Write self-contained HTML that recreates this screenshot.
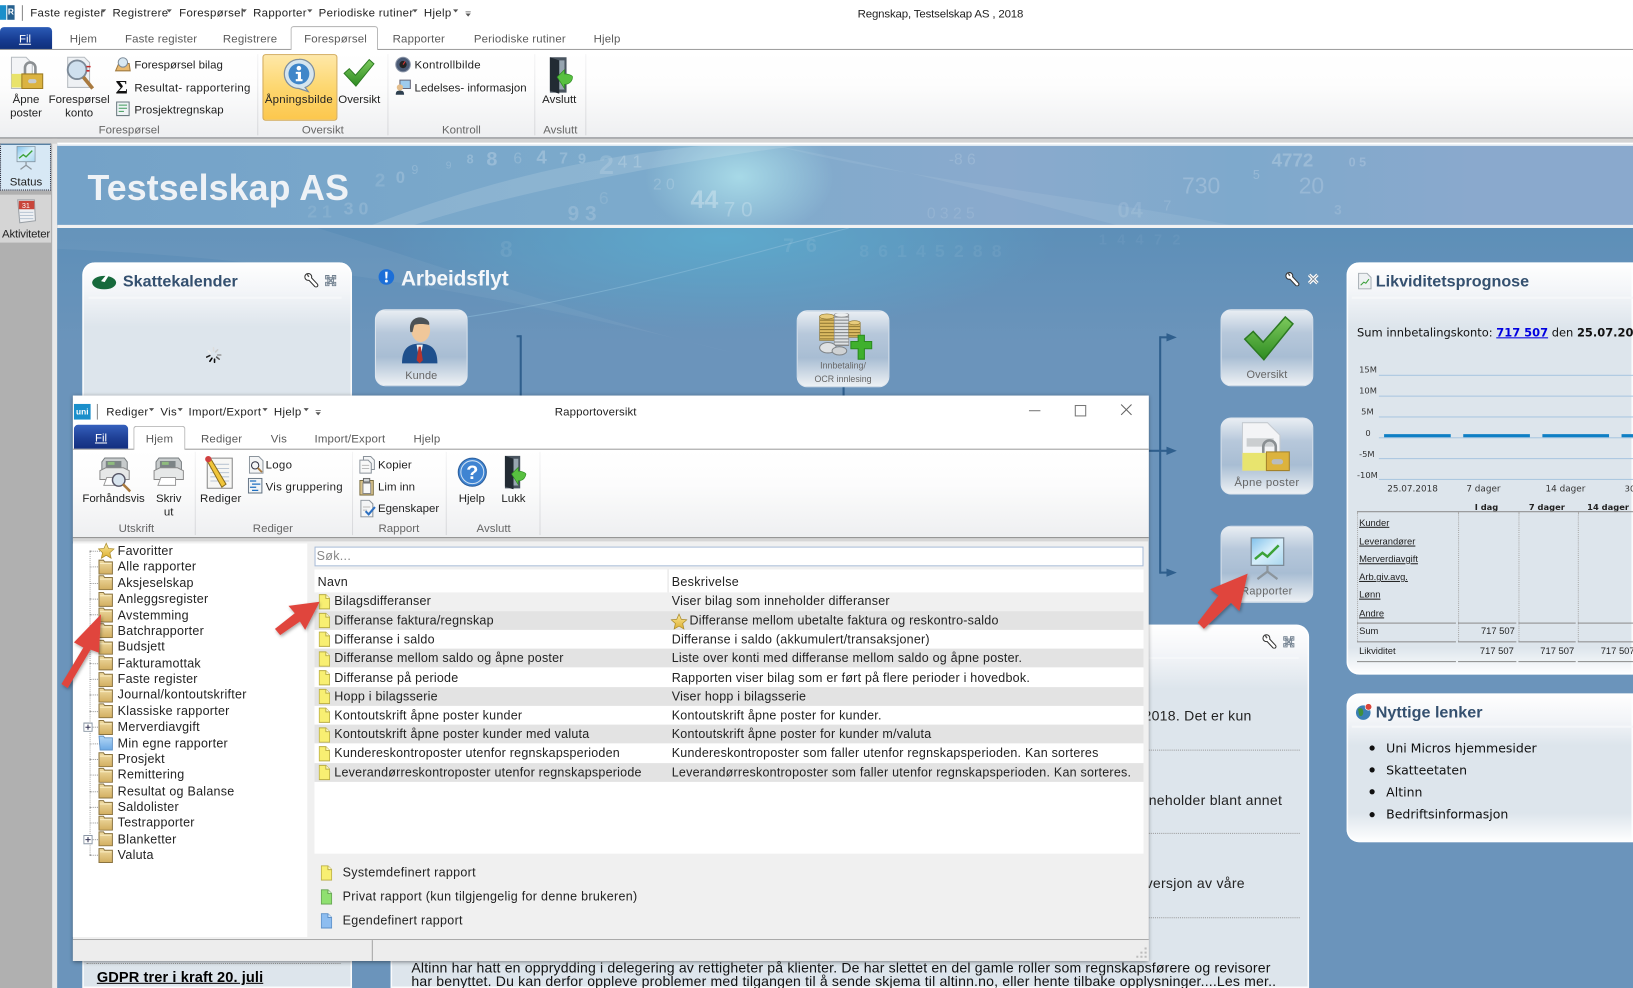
<!DOCTYPE html>
<html lang="no"><head><meta charset="utf-8"><title>Regnskap, Testselskap AS</title>
<style>
html,body{margin:0;padding:0;width:1633px;height:988px;overflow:hidden;background:#6b94bb}
#r{position:absolute;left:0;top:0;width:1568px;height:949px;transform-origin:0 0;transform:scale(1.04145,1.0411);overflow:hidden;font-family:"Liberation Sans",sans-serif;font-size:11px;color:#222;background:#6b94bb}
.a,.t,svg.i{position:absolute}
.t{white-space:nowrap;line-height:14px;letter-spacing:0;font-style:normal;font-size:11px;margin-top:1px}
.c{transform:translateX(-50%)}
.g{color:#666}.tb{color:#5a5a5a;letter-spacing:.15px;margin-top:0}
.m{letter-spacing:.3px}
.l{font-size:12px;letter-spacing:.22px;margin-top:0}
.tr{font-size:12px;letter-spacing:.25px;margin-top:0}
.lg{font-size:12px;letter-spacing:.3px;margin-top:0}
.dg{position:absolute;color:#fff;white-space:nowrap;line-height:1;font-weight:bold}
.sep{position:absolute;width:1px;background:linear-gradient(#f4f4f5,#d6d7da)}
.card{position:absolute;border-radius:12px;box-shadow:inset 0 0 0 1.5px rgba(255,255,255,.85);background:linear-gradient(#fff 0,#f3f5f8 28px,#dde5ec 62px,#dde5ec 100%)}
.hd{position:absolute;font-weight:bold;font-size:15.5px;line-height:18px;color:#34506f;white-space:nowrap}
.wl{position:absolute;height:2px;background:#f5f7f9}
.btn{position:absolute;width:87px;height:72px;border:1px solid #dfe6ee;border-radius:10px;background:linear-gradient(#e9eef3,#b7c8db 30%,#a8bdd3 62%,#dfe6ed 92%,#edf1f5)}
.bl{position:absolute;left:0;right:0;text-align:center;font-size:10.5px;color:#666;letter-spacing:.3px;line-height:12px;white-space:nowrap}
.d{position:absolute;border-left:1px dotted #aaa}
.h{position:absolute;border-top:1px dotted #999}
.vf{font-family:"DejaVu Sans",sans-serif;letter-spacing:0}
.tl{color:#222;font-size:9px;text-decoration:underline;letter-spacing:0}
.line{position:absolute;background:#2f5f8d}
.ln{position:absolute;background:#8d8d8d;height:1px}
.sm{font-size:9px}
.mt{font-size:13.5px;letter-spacing:.25px;color:#222}
</style></head><body><div id="r">
<svg width="0" height="0" style="position:absolute"><defs>
<linearGradient id="fo" x1="0" y1="0" x2="0" y2="1"><stop offset="0" stop-color="#f0dca4"/><stop offset="1" stop-color="#d2ae60"/></linearGradient>
<linearGradient id="fb" x1="0" y1="0" x2="0" y2="1"><stop offset="0" stop-color="#b6d8f6"/><stop offset="1" stop-color="#6ba8e4"/></linearGradient>
<linearGradient id="st" x1="0" y1="0" x2="0" y2="1"><stop offset="0" stop-color="#fbe99a"/><stop offset="1" stop-color="#dcae2e"/></linearGradient>
<linearGradient id="ck" x1="0" y1="0" x2="0" y2="1"><stop offset="0" stop-color="#7cc95c"/><stop offset="1" stop-color="#2e8c22"/></linearGradient>
<linearGradient id="sky" x1="0" y1="0" x2="1" y2="1"><stop offset="0" stop-color="#7fc0ea"/><stop offset=".5" stop-color="#d6eefa"/><stop offset="1" stop-color="#a9d6ee"/></linearGradient>
<pattern id="cg" width="4" height="3" patternUnits="userSpaceOnUse"><rect width="4" height="3" fill="#dcbb62"/><rect width="4" height="1" fill="#8c7430"/></pattern>
<pattern id="cs" width="4" height="3" patternUnits="userSpaceOnUse"><rect width="4" height="3" fill="#dfe2e4"/><rect width="4" height="1" fill="#7f8488"/></pattern>
<symbol id="fold" viewBox="0 0 14 14"><path d="M1 1h4l1 1.500h7v11H1z" fill="url(#fo)" stroke="#8a7340" stroke-width=".9"/><path d="M1.800 4h10.500" stroke="#f8ebc0" stroke-width=".9"/></symbol>
<symbol id="foldb" viewBox="0 0 14 14"><path d="M1 1h4l1 1.500h7v11H2z" fill="url(#fb)" stroke="#5d8fc4" stroke-width=".8"/></symbol>
<symbol id="fy" viewBox="0 0 12 16"><path d="M.5.5h7l4 4v11H.5z" fill="#f8ef72" stroke="#b9ad45"/><path d="M7.500.5v4h4" fill="#fffbd0" stroke="#b9ad45"/></symbol>
<symbol id="fg" viewBox="0 0 12 16"><path d="M.5.5h7l4 4v11H.5z" fill="#8fe070" stroke="#63a150"/><path d="M7.500.5v4h4" fill="#d9f7cc" stroke="#63a150"/></symbol>
<symbol id="fbl" viewBox="0 0 12 16"><path d="M.5.5h7l4 4v11H.5z" fill="#8dbdf0" stroke="#5c8fc7"/><path d="M7.500.5v4h4" fill="#dcecfc" stroke="#5c8fc7"/></symbol>
<symbol id="star" viewBox="0 0 16 16"><path d="M8 .8l2.200 5 5.300.5-4 3.600 1.200 5.300L8 12.400l-4.700 2.800 1.200-5.300-4-3.600 5.300-.5z" fill="url(#st)" stroke="#a98a2c" stroke-width=".7"/></symbol>
<symbol id="wr" viewBox="0 0 14 14"><path d="M4 4l7.500 8" stroke="#333" stroke-width="4.400" stroke-linecap="round"/><circle cx="4" cy="4" r="3.300" fill="#fff" stroke="#333"/><path d="M4 4l7.500 8" stroke="#fff" stroke-width="2.400" stroke-linecap="round"/><path d="M2.500.5l2 3.500" stroke="#555" stroke-width="1.400"/></symbol>
<symbol id="xb" viewBox="0 0 12 12"><path d="M1.500 1.500h3v2h3v-2h3v3h-2v3h2v3h-3v-2h-3v2h-3v-3h2v-3h-2z" fill="#eef1f4" stroke="#6f7e8d" stroke-width=".8"/><path d="M2.500 2.500l7 7M9.500 2.500l-7 7" stroke="#7b8997" stroke-width="1.200"/></symbol>
<symbol id="chk" viewBox="0 0 34 30"><path d="M1.500 15.500L7 10.500 13.500 17.500 28 1 33 5.500 14 29z" fill="url(#ck)" stroke="#2c7a22"/></symbol>
<symbol id="door" viewBox="0 0 24 36"><path d="M2 1h16v34H2z" fill="#4a5560"/><path d="M5 4h11v28H5z" fill="#97a5b0"/><path d="M2 1l9 3v32l-9-3z" fill="#222b33"/><path d="M9 20l7-7v4c3 0 7 1 8 3-1 5-4 7-8 7v4z" fill="#58c040" stroke="#2f8d23" stroke-width=".7"/></symbol>
<symbol id="pres" viewBox="0 0 30 36"><path d="M2 1h26v22H2z" fill="url(#sky)" stroke="#7c8a96"/><path d="M5 18l6-5 4 3 9-9" fill="none" stroke="#3ca238" stroke-width="2"/><path d="M15 23v5M15 28l-8 6M15 28l8 6" stroke="#8c959c" stroke-width="1.800" fill="none"/></symbol>
<symbol id="prt" viewBox="0 0 32 34"><path d="M6 2h20l3 4v16H3V6z" fill="#c7cbcc" stroke="#767b7e"/><path d="M7 5h16v7H7z" fill="#7c8486"/><path d="M9 6h7v3H9z" fill="#8fbc7e"/><path d="M1 15l6-3h18l6 3v9H1z" fill="#e6e8e8" stroke="#888"/><path d="M8 22h15v8H5z" fill="#fff" stroke="#999"/></symbol>
</defs></svg>

<!-- main background -->
<div class="a" style="left:50px;top:132px;width:5px;height:817px;background:#e9e9e9"></div>
<div class="a" style="left:0;top:132px;width:50px;height:817px;background:#b0b0b0"></div>
<div class="a" style="left:55px;top:219px;width:1513px;height:730px;overflow:hidden;background:radial-gradient(ellipse 320px 90px at 640px 10px,#5ea9cc 0,rgba(94,169,204,0) 100%),linear-gradient(#5d8fb8,#6b94bb 110px)">
<svg class="a" style="left:0;top:0" width="1513" height="130"><path d="M360 90C520 70 680 20 760 0" stroke="#8fc0db" fill="none" opacity=".5"/><path d="M0 0h250C380 40 520 90 650 120 450 70 250 30 0 20z" fill="#fff" opacity=".05"/></svg>
<div class="a" style="left:0;top:0;width:1513px;height:60px;opacity:.6">
<span class="dg" style="left:425px;top:10px;font-size:22px;opacity:.13">8</span>
<span class="dg" style="left:697px;top:8px;font-size:19px;opacity:.14;letter-spacing:3px">7 6</span>
<span class="dg" style="left:770px;top:14px;font-size:17px;opacity:.1;letter-spacing:2px">8 6 1 4 5 2 8 8</span>
<span class="dg" style="left:1000px;top:4px;font-size:14px;opacity:.08;letter-spacing:3px">1 4 4 7 2</span>
</div>
</div>
<!-- banner -->
<div class="a" style="left:55px;top:139px;width:1513px;height:77px;overflow:hidden;background:radial-gradient(ellipse 90px 60px at 655px 30px,#a7d9e7 0,rgba(167,217,231,0) 100%),linear-gradient(90deg,#74a2c8,#7dabcc 40%,#8aaacd 60%,#7ea9cc 75%,#8aa9cd 90%);border-top:1px solid #fff">
<svg class="a" style="left:0;top:0" width="1513" height="77"><path d="M300 77C420 30 520 10 620 0H710C560 20 420 50 340 77z" fill="#fff" opacity=".13"/><path d="M690 0C800 30 1000 50 1130 77H1020C900 45 800 20 690 0z" fill="#fff" opacity=".07"/></svg>
<div class="a" style="left:0;top:0;width:1513px;height:77px;opacity:.65">
<span class="dg" style="left:305px;top:24px;font-size:18px;opacity:.18">2</span>
<span class="dg" style="left:325px;top:24px;font-size:16px;opacity:.28">0</span>
<span class="dg" style="left:340px;top:17px;font-size:12px;opacity:.25;font-weight:normal">9</span>
<span class="dg" style="left:373px;top:15px;font-size:10px;opacity:.25;font-weight:normal">9</span>
<span class="dg" style="left:393px;top:7px;font-size:12px;opacity:.3">8</span>
<span class="dg" style="left:412px;top:4px;font-size:19px;opacity:.35">8</span>
<span class="dg" style="left:438px;top:5px;font-size:15px;opacity:.25;font-weight:normal">6</span>
<span class="dg" style="left:460px;top:2px;font-size:18px;opacity:.35">4</span>
<span class="dg" style="left:482px;top:5px;font-size:15px;opacity:.3">7</span>
<span class="dg" style="left:500px;top:5px;font-size:14px;opacity:.3">9</span>
<span class="dg" style="left:520px;top:5px;font-size:26px;opacity:.22">2</span>
<span class="dg" style="left:240px;top:55px;font-size:17px;opacity:.14">2 1</span>
<span class="dg" style="left:275px;top:52px;font-size:17px;opacity:.22">3 0</span>
<span class="dg" style="left:490px;top:56px;font-size:20px;opacity:.25">9 3</span>
<span class="dg" style="left:520px;top:42px;font-size:17px;opacity:.16;font-weight:normal">6</span>
<span class="dg" style="left:538px;top:7px;font-size:17px;opacity:.3;font-weight:normal">4 1</span>
<span class="dg" style="left:572px;top:30px;font-size:15px;opacity:.25;font-weight:normal">2 0</span>
<span class="dg" style="left:608px;top:41px;font-size:24px;opacity:.45;letter-spacing:0">44</span>
<span class="dg" style="left:640px;top:52px;font-size:20px;opacity:.35;font-weight:normal">7 0</span>
<span class="dg" style="left:856px;top:6px;font-size:15px;opacity:.22;font-weight:normal">-8 6</span>
<span class="dg" style="left:835px;top:58px;font-size:15px;opacity:.16;font-weight:normal">0 3 2 5</span>
<span class="dg" style="left:1018px;top:52px;font-size:21px;opacity:.16;letter-spacing:1px">04</span>
<span class="dg" style="left:1062px;top:50px;font-size:14px;opacity:.2;font-weight:normal">7</span>
<span class="dg" style="left:1080px;top:28px;font-size:22px;opacity:.3;font-weight:normal">730</span>
<span class="dg" style="left:1148px;top:22px;font-size:12px;opacity:.3;font-weight:normal">5</span>
<span class="dg" style="left:1166px;top:5px;font-size:18px;opacity:.32">4772</span>
<span class="dg" style="left:1240px;top:10px;font-size:12px;opacity:.28">0 5</span>
<span class="dg" style="left:1192px;top:28px;font-size:22px;opacity:.28;font-weight:normal">20</span>
<span class="dg" style="left:1226px;top:55px;font-size:13px;opacity:.2">3</span>
</div>
</div>
<div class="a" style="left:55px;top:216px;width:1513px;height:3px;background:#f2f2f2"></div>
<span class="t" style="left:84px;top:161px;font-size:34.300px;line-height:38px;font-weight:bold;color:#eef2f6;letter-spacing:.1px">Testselskap AS</span>

<!-- left rail -->
<div class="a" style="left:0;top:137px;width:49px;height:46px;background:#d7e8f5;border:1px dotted #223;box-sizing:border-box;border-top:2px solid #2d5d88"></div>
<svg class="i" style="left:15px;top:139px" width="20" height="26"><use href="#pres"/></svg>
<span class="t c" style="left:25px;top:167px;color:#222">Status</span>
<div class="a" style="left:0;top:187px;width:49px;height:46px;background:#d5d5d5"></div>
<svg class="i" style="left:16px;top:190px" width="20" height="26" viewBox="0 0 20 26"><path d="M1 2h16l1 20-15 2z" fill="#eef0f3" stroke="#9aa0a6"/><path d="M2 3h15v8H2z" fill="#c8453a"/><text x="5" y="10" font-size="7" fill="#fff" font-family="Liberation Sans">31</text><path d="M3 14h13M3 17h13M3 20h13" stroke="#b8c5d3"/></svg>
<span class="t c" style="left:25px;top:217px;color:#222;letter-spacing:-.2px">Aktiviteter</span>

<!-- top titlebar & ribbon -->
<div class="a" style="left:0;top:0;width:1568px;height:48px;background:#fff"></div>
<div class="a" style="left:0;top:5px;width:6px;height:14px;background:#1a8fcb"></div>
<div class="a" style="left:7px;top:5px;width:7px;height:14px;background:#26608e;color:#fff;font-size:8px;line-height:14px;font-weight:bold;text-align:center">R</div>
<div class="a" style="left:21px;top:5px;width:1px;height:15px;background:#888"></div>
<span class="t m" style="left:29px;top:5px">Faste register</span>
<span class="t m" style="left:108px;top:5px">Registrere</span>
<span class="t m" style="left:172px;top:5px">Forespørsel</span>
<span class="t m" style="left:243px;top:5px">Rapporter</span>
<span class="t m" style="left:306px;top:5px">Periodiske rutiner</span>
<span class="t m" style="left:407px;top:5px">Hjelp</span>
<svg class="i" style="left:97px;top:8px" width="360" height="9" fill="#555"><path d="M0 1h5L2.500 4zM63 1h5l-2.500 3zM135 1h5l-2.500 3zM198 1h5l-2.500 3zM299 1h5l-2.500 3zM338 1h5l-2.500 3zM350 3h5v.8h-5zM350 5h5l-2.500 3z"/></svg>
<span class="t c" style="left:903px;top:6px;letter-spacing:-.15px;color:#222">Regnskap, Testselskap AS , 2018</span>

<div class="a" style="left:0;top:26px;width:50px;height:22px;border-radius:4px 4px 0 0;background:linear-gradient(#2b5bb6,#173c92 55%,#0f2f78)"></div>
<span class="t c" style="left:24px;top:30px;color:#fff;text-decoration:underline">Fil</span>
<div class="a" style="left:0;top:47px;width:1568px;height:1px;background:#9b9b9b"></div>
<div class="a" style="left:279px;top:25px;width:82px;height:23px;background:#fff;border:1px solid #b9b9b9;border-bottom:0;border-radius:3px 3px 0 0"></div>
<span class="t tb" style="left:67px;top:31px">Hjem</span>
<span class="t tb" style="left:120px;top:31px">Faste register</span>
<span class="t tb" style="left:214px;top:31px">Registrere</span>
<span class="t tb" style="left:292px;top:31px">Forespørsel</span>
<span class="t tb" style="left:377px;top:31px">Rapporter</span>
<span class="t tb" style="left:455px;top:31px">Periodiske rutiner</span>
<span class="t tb" style="left:570px;top:31px">Hjelp</span>

<div class="a" style="left:0;top:48px;width:1568px;height:84px;background:linear-gradient(#fff,#fdfdfd 40%,#eeeff1);border-bottom:1px solid #858585"></div>
<div class="a" style="left:0;top:133px;width:1568px;height:5px;background:#d4d4d4"></div>
<div class="a" style="left:55px;top:137px;width:1513px;height:2px;background:#fff"></div>
<div class="sep" style="left:247px;top:52px;height:78px"></div>
<div class="sep" style="left:372px;top:52px;height:78px"></div>
<div class="sep" style="left:513px;top:52px;height:78px"></div>
<div class="sep" style="left:562px;top:52px;height:78px"></div>
<span class="t c g" style="left:124px;top:117px">Forespørsel</span>
<span class="t c g" style="left:310px;top:117px">Oversikt</span>
<span class="t c g" style="left:443px;top:117px">Kontroll</span>
<span class="t c g" style="left:538px;top:117px">Avslutt</span>

<!-- Ribbon icons -->
<svg class="i" style="left:10px;top:54px" width="32" height="34" viewBox="0 0 32 34"><path d="M1 1h14l6 6v24H1z" fill="#f3f4f6" stroke="#b6bbc0"/><path d="M1 17h20v13H1z" fill="#e9e36a"/><path d="M14 17v-6a5 5 0 0 1 10 0v6" fill="none" stroke="#8b8f92" stroke-width="2.500"/><path d="M11 17h20v14H11z" fill="#dbb340" stroke="#9e7d24"/><rect x="17" y="22" width="8" height="4" rx="2" fill="#c7ccd0"/></svg>
<svg class="i" style="left:62px;top:54px" width="30" height="34" viewBox="0 0 30 34"><path d="M3 1h16l5 5v24H3z" fill="#eef1f4" stroke="#b6bbc0"/><circle cx="12" cy="13" r="9" fill="#cfe0ee" stroke="#7c8a98" stroke-width="1.800"/><path d="M18 20l9 11" stroke="#a97a3f" stroke-width="3.500"/><path d="M21 10h4M21 14h3" stroke="#c62a2a" stroke-width="1.500"/></svg>
<svg class="i" style="left:110px;top:54px" width="16" height="16" viewBox="0 0 16 16"><path d="M1 14l3-7h10l1 7z" fill="#e9b96e" stroke="#a07a40"/><circle cx="8" cy="6" r="4.500" fill="#d8e8f2" stroke="#7d8b99"/></svg>
<span class="t" style="left:129px;top:55px">Forespørsel bilag</span>
<span class="t" style="left:111px;top:74px;font-size:18px;line-height:18px;font-family:'Liberation Serif',serif;font-weight:bold;color:#111">Σ</span>
<span class="t" style="left:129px;top:77px;letter-spacing:.24px">Resultat- rapportering</span>
<svg class="i" style="left:111px;top:97px" width="14" height="15" viewBox="0 0 14 15"><path d="M1 1h12v13H1z" fill="#eef3f5" stroke="#6b7a80"/><path d="M3 4h8M3 7h8M3 10h5" stroke="#3f9a5a"/></svg>
<span class="t" style="left:129px;top:98px;letter-spacing:.05px">Prosjektregnskap</span>
<div class="a" style="left:252px;top:52px;width:70px;height:62px;border:1px solid #d3ab5b;border-radius:3px;background:linear-gradient(#fee8a8,#fdd770 50%,#fcc74d)"></div>
<svg class="i" style="left:270px;top:55px" width="34" height="34" viewBox="0 0 34 34"><path d="M17 2a14 14 0 0 1 6 27l3 4-9-3a14 14 0 0 1 0-28z" fill="#d5e5ef" stroke="#7f8f9e" stroke-width="1.200"/><circle cx="17" cy="16" r="10" fill="#3f86c9"/><circle cx="17" cy="10.500" r="2.200" fill="#fff"/><path d="M14 14h5v7h1.500v2h-6.500v-2h2v-5h-2z" fill="#fff"/></svg>
<span class="t c" style="left:287px;top:88px;letter-spacing:.2px">Åpningsbilde</span>
<svg class="i" style="left:329px;top:55px" width="31" height="30"><use href="#chk"/></svg>
<span class="t c" style="left:345px;top:88px">Oversikt</span>
<svg class="i" style="left:379px;top:54px" width="16" height="16" viewBox="0 0 16 16"><circle cx="8" cy="8" r="7" fill="#4a5a75" stroke="#8c96a8"/><circle cx="8" cy="8" r="3.500" fill="#222"/><path d="M8 8l2-3" stroke="#d33"/></svg>
<span class="t" style="left:398px;top:55px;letter-spacing:.25px">Kontrollbilde</span>
<svg class="i" style="left:379px;top:76px" width="16" height="16" viewBox="0 0 16 16"><path d="M5 1h10v8H5z" fill="#9ecbec" stroke="#667"/><circle cx="5" cy="8" r="3" fill="#e3bd8b"/><path d="M1 15c0-4 2-4 4-4s4 0 4 4z" fill="#2e4050"/></svg>
<span class="t" style="left:398px;top:77px">Ledelses- informasjon</span>
<svg class="i" style="left:526px;top:54px" width="24" height="36"><use href="#door"/></svg>
<span class="t c" style="left:537px;top:88px">Avslutt</span>
<span class="t c" style="left:25px;top:88px">Åpne</span><span class="t c" style="left:25px;top:101px">poster</span>
<span class="t c" style="left:76px;top:88px">Forespørsel</span><span class="t c" style="left:76px;top:101px">konto</span>

<!-- Skattekalender card -->
<div class="card" style="left:79px;top:252px;width:259px;height:697px;border-radius:12px 12px 0 0"></div>
<svg class="i" style="left:88px;top:262px" width="24" height="16" viewBox="0 0 24 16"><ellipse cx="12" cy="9.500" rx="11.500" ry="6.500" fill="#176a3c"/><path d="M9 8l6-7 2 .8-4.500 7.200z" fill="#fff"/></svg>
<div class="hd" style="left:118px;top:262px">Skattekalender</div>
<svg class="i" style="left:292px;top:262px" width="14" height="14"><use href="#wr"/></svg>
<svg class="i" style="left:311px;top:263px" width="13" height="13"><use href="#xb"/></svg>
<div class="wl" style="left:85px;top:285px;width:243px"></div>
<svg class="i" style="left:197px;top:333px" width="16" height="16" viewBox="0 0 16 16" fill="none" stroke-linecap="round" stroke-width="1.500"><path d="M8 1v3" stroke="#ddd"/><path d="M12 3l-2 2" stroke="#ccc"/><path d="M15 8h-3" stroke="#999"/><path d="M13.500 12l-2.500-2" stroke="#555"/><path d="M9 15v-3" stroke="#111"/><path d="M4.500 14l2-3" stroke="#000"/><path d="M1.500 10l3-1.500" stroke="#222"/><path d="M3 4l2 2" stroke="#eee"/></svg>
<div class="h" style="left:83px;top:925px;width:244px"></div>
<span class="t" style="left:93px;top:930px;font-size:14px;font-weight:bold;color:#000;text-decoration:underline;letter-spacing:.1px">GDPR trer i kraft 20. juli</span>

<!-- Arbeidsflyt -->
<svg class="i" style="left:363px;top:258px" width="16" height="16" viewBox="0 0 16 16"><circle cx="8" cy="8" r="7.500" fill="#1c6fd8"/><path d="M6.800 3h2.400l-.4 6.500H7.200z" fill="#fff"/><circle cx="8" cy="12" r="1.400" fill="#fff"/></svg>
<div class="a" style="left:385px;top:257px;font-size:20px;line-height:23px;font-weight:bold;color:#f4f7fa;white-space:nowrap;letter-spacing:-.1px">Arbeidsflyt</div>
<svg class="i" style="left:1234px;top:261px" width="14" height="14"><use href="#wr"/></svg>
<svg class="i" style="left:1255px;top:262px" width="12" height="12" viewBox="0 0 12 12"><path d="M2 2l8 8M10 2l-8 8" stroke="#fff" stroke-width="3.200"/><path d="M2 2l8 8M10 2l-8 8" stroke="#7a8794" stroke-width=".9"/></svg>

<div class="btn" style="left:360px;top:297px"><div class="bl" style="top:56.500px;letter-spacing:.1px">Kunde</div></div>
<svg class="i" style="left:385px;top:304px" width="36" height="46" viewBox="0 0 36 46"><path d="M1 45c0-15 7-19 17-19s17 4 17 19z" fill="#1e4f8c"/><path d="M15 27l3 17 3-17z" fill="#f2f2f2"/><path d="M17 29h2l2 13-3 3-3-3z" fill="#b5342e"/><ellipse cx="19" cy="13" rx="9" ry="11.500" fill="#f0c79a"/><path d="M9 15C7 4 14 0 20 1c5 1 8 4 7 7-5-1-11-1-14 0-1 2-1 4-2 7z" fill="#4c5256"/></svg>
<div class="btn" style="left:765px;top:298px"><div class="bl" style="top:46px;font-size:8.500px;line-height:13px;letter-spacing:0">Innbetaling/<br>OCR innlesing</div></div>
<svg class="i" style="left:786px;top:301px" width="52" height="46" viewBox="0 0 52 46"><rect x="1" y="3" width="14" height="23" fill="url(#cg)" stroke="#8c7430" stroke-width=".6"/><ellipse cx="8" cy="3" rx="7" ry="2.500" fill="#e8cc7c" stroke="#8c7430" stroke-width=".6"/><rect x="15" y="1" width="14" height="30" fill="url(#cs)" stroke="#888" stroke-width=".6"/><ellipse cx="22" cy="1.500" rx="7" ry="2" fill="#eceeef" stroke="#888" stroke-width=".6"/><rect x="29" y="9" width="11" height="14" fill="url(#cg)" stroke="#8c7430" stroke-width=".6"/><ellipse cx="34.500" cy="9" rx="5.500" ry="2" fill="#e8cc7c" stroke="#8c7430" stroke-width=".6"/><ellipse cx="9" cy="33" rx="8" ry="5" fill="#dfe1e3" stroke="#7f8488"/><ellipse cx="20" cy="36" rx="7" ry="4" fill="#cfd2d4" stroke="#7f8488"/><path d="M31 27h7v-6h6v6h7v7h-7v10h-6V34h-7z" fill="#3fb02d" stroke="#2a8a1f"/></svg>
<div class="btn" style="left:1172px;top:297px"><div class="bl" style="top:56px;letter-spacing:.1px">Oversikt</div></div>
<svg class="i" style="left:1193px;top:303px" width="50" height="44"><use href="#chk"/></svg>
<div class="btn" style="left:1172px;top:401px"><div class="bl" style="top:56px;font-size:11px">Åpne poster</div></div>
<svg class="i" style="left:1192px;top:405px" width="50" height="50" viewBox="0 0 50 50"><path d="M1 1h24l12 12v34H1z" fill="#f3f4f6" stroke="#c5cad0"/><path d="M1 30h36v17H1z" fill="#e8e46e"/><path d="M5 16h26v8H5z" fill="#b9bdc0" opacity=".7"/><path d="M21 30V24a6 6 0 0 1 12 0v6" fill="none" stroke="#8a8f92" stroke-width="2.500"/><path d="M24 29h22v18H24z" fill="#dcb33d" stroke="#a3822a"/><rect x="29" y="36" width="11" height="5" rx="2.500" fill="#b8bcc0"/></svg>
<div class="btn" style="left:1172px;top:505px"><div class="bl" style="top:56px">Rapporter</div></div>
<svg class="i" style="left:1199px;top:512px" width="36" height="50"><use href="#pres"/></svg>

<div class="line" style="left:499px;top:322px;width:2px;height:60px"></div>
<div class="line" style="left:496px;top:322px;width:4px;height:2px"></div>
<div class="line" style="left:809px;top:372px;width:2px;height:10px"></div>
<div class="line" style="left:1113px;top:323px;width:2px;height:228px"></div>
<div class="line" style="left:1114px;top:323px;width:10px;height:2px"></div>
<div class="line" style="left:1103px;top:432px;width:22px;height:2px"></div>
<div class="line" style="left:1114px;top:549px;width:10px;height:2px"></div>
<svg class="i" style="left:1120px;top:320px" width="10" height="240" fill="#2f5f8d"><path d="M0 0l10 4-10 4zM0 109l10 4-10 4zM0 226l10 4-10 4z"/></svg>

<!-- Middle card -->
<div class="card" style="left:375px;top:600px;width:882px;height:349px;border-radius:12px 12px 0 0"></div>
<svg class="i" style="left:1212px;top:609px" width="14" height="14"><use href="#wr"/></svg>
<svg class="i" style="left:1231px;top:610px" width="13" height="13"><use href="#xb"/></svg>
<div class="wl" style="left:385px;top:631px;width:862px"></div>
<span class="t mt" style="left:1098px;top:680px">2018. Det er kun</span>
<span class="t mt" style="left:1103px;top:761px">neholder blant annet</span>
<span class="t mt" style="left:1100px;top:841px">versjon av våre</span>
<div class="h" style="left:1100px;top:720px;width:148px"></div>
<div class="h" style="left:1100px;top:800px;width:148px"></div>
<div class="h" style="left:1100px;top:881px;width:148px"></div>
<span class="t" style="left:395px;top:922px;font-size:13.500px;letter-spacing:.16px;color:#111">Altinn har hatt en opprydding i delegering av rettigheter på klienter. De har slettet en del gamle roller som regnskapsførere og revisorer</span>
<span class="t" style="left:395px;top:935px;font-size:13.500px;letter-spacing:.16px;color:#111">har benyttet. Du kan derfor oppleve problemer med tilgangen til å sende skjema til altinn.no, eller hente tilbake opplysninger....Les mer..</span>

<!-- Likviditet -->
<div class="card" style="left:1293px;top:252px;width:275px;height:396px;border-radius:12px 0 0 12px;background:linear-gradient(#fff 0,#f3f5f8 28px,#dde5ec 62px,#dde5ec 370px,#fff 396px)"></div>
<svg class="i" style="left:1304px;top:262px" width="13" height="16" viewBox="0 0 13 16"><path d="M.5.5h8l4 4v11H.5z" fill="#eef1f3" stroke="#a5adb3"/><path d="M2.500 12l3-3 2 1 3-4" stroke="#3aa03a" fill="none"/></svg>
<div class="hd" style="left:1321px;top:262px">Likviditetsprognose</div>
<div class="wl" style="left:1298px;top:285px;width:270px"></div>
<span class="t vf" style="left:1303px;top:312px;font-size:11px;color:#111">Sum innbetalingskonto: <b style="color:#0000e0;text-decoration:underline">717 507</b> den <b style="color:#111">25.07.20</b></span>
<span class="t vf" style="left:1305px;top:348px;font-size:8px;color:#333">15M</span>
<span class="t vf" style="left:1305px;top:368px;font-size:8px;color:#333">10M</span>
<span class="t vf" style="left:1307px;top:388px;font-size:8px;color:#333">5M</span>
<span class="t vf" style="left:1311px;top:409px;font-size:8px;color:#333">0</span>
<span class="t vf" style="left:1305px;top:429px;font-size:8px;color:#333">-5M</span>
<span class="t vf" style="left:1303px;top:449px;font-size:8px;color:#333">-10M</span>
<div class="a" style="left:1324px;top:360px;width:244px;height:1px;background:#a9c6e0"></div>
<div class="a" style="left:1324px;top:380px;width:244px;height:1px;background:#a9c6e0"></div>
<div class="a" style="left:1324px;top:400px;width:244px;height:1px;background:#a9c6e0"></div>
<div class="a" style="left:1324px;top:420px;width:244px;height:1px;background:#a9c6e0"></div>
<div class="a" style="left:1324px;top:440px;width:244px;height:1px;background:#a9c6e0"></div>
<div class="a" style="left:1324px;top:460px;width:244px;height:1px;background:#a9c6e0"></div>
<div class="a" style="left:1329px;top:417px;width:64px;height:3px;background:#0f7fc4"></div>
<div class="a" style="left:1405px;top:417px;width:64px;height:3px;background:#0f7fc4"></div>
<div class="a" style="left:1481px;top:417px;width:64px;height:3px;background:#0f7fc4"></div>
<div class="a" style="left:1557px;top:417px;width:11px;height:3px;background:#0f7fc4"></div>
<span class="t vf" style="left:1332px;top:462px;font-size:8.500px;color:#333">25.07.2018</span>
<span class="t vf" style="left:1408px;top:462px;font-size:8.500px;color:#333">7 dager</span>
<span class="t vf" style="left:1484px;top:462px;font-size:8.500px;color:#333">14 dager</span>
<span class="t vf" style="left:1560px;top:462px;font-size:8px;color:#333">30</span>
<span class="t vf" style="left:1416px;top:480px;font-size:8px;font-weight:bold;color:#222">I dag</span>
<span class="t vf" style="left:1468px;top:480px;font-size:8px;font-weight:bold;color:#222">7 dager</span>
<span class="t vf" style="left:1524px;top:480px;font-size:8px;font-weight:bold;color:#222">14 dager</span>
<div class="ln" style="left:1303px;top:491px;width:265px"></div>
<div class="d" style="left:1303px;top:492px;height:124px"></div>
<div class="d" style="left:1400px;top:492px;height:124px"></div>
<div class="d" style="left:1458px;top:492px;height:124px"></div>
<div class="d" style="left:1515px;top:492px;height:124px"></div>
<span class="t tl" style="left:1305px;top:494px">Kunder</span>
<span class="t tl" style="left:1305px;top:512px">Leverandører</span>
<span class="t tl" style="left:1305px;top:529px">Merverdiavgift</span>
<span class="t tl" style="left:1305px;top:546px">Arb.giv.avg.</span>
<span class="t tl" style="left:1305px;top:563px">Lønn</span>
<span class="t tl" style="left:1305px;top:581px">Andre</span>
<div class="ln" style="left:1303px;top:598px;width:95px"></div><div class="ln" style="left:1400px;top:598px;width:56px"></div><div class="ln" style="left:1458px;top:598px;width:55px"></div><div class="ln" style="left:1515px;top:598px;width:53px"></div>
<span class="t sm" style="left:1305px;top:598px">Sum</span>
<span class="t sm" style="left:1422px;top:598px">717 507</span>
<div class="ln" style="left:1303px;top:616px;width:95px"></div><div class="ln" style="left:1400px;top:616px;width:56px"></div><div class="ln" style="left:1458px;top:616px;width:55px"></div><div class="ln" style="left:1515px;top:616px;width:53px"></div>
<span class="t sm" style="left:1305px;top:617px">Likviditet</span>
<span class="t sm" style="left:1421px;top:617px">717 507</span>
<span class="t sm" style="left:1479px;top:617px">717 507</span>
<span class="t sm" style="left:1537px;top:617px">717 507</span>
<div class="ln" style="left:1303px;top:635px;width:95px"></div><div class="ln" style="left:1400px;top:635px;width:56px"></div><div class="ln" style="left:1458px;top:635px;width:55px"></div><div class="ln" style="left:1515px;top:635px;width:53px"></div>

<!-- Nyttige lenker -->
<div class="card" style="left:1293px;top:666px;width:275px;height:143px;border-radius:12px 0 0 12px;background:linear-gradient(#fff 0,#f3f5f8 25px,#dde5ec 50px,#dde5ec 115px,#fff 143px)"></div>
<svg class="i" style="left:1301px;top:675px" width="17" height="17" viewBox="0 0 17 17"><circle cx="8" cy="9.500" r="7" fill="#3b7fb5"/><path d="M3 6c3-2 5 0 5 3s-2 5-4 3z" fill="#3f8f3c"/><circle cx="13" cy="4" r="3.200" fill="#d8443a" stroke="#fff" stroke-width=".6"/></svg>
<div class="hd" style="left:1321px;top:676px">Nyttige lenker</div>
<div class="wl" style="left:1298px;top:697px;width:270px"></div>
<div class="a" style="left:1315px;top:716px;width:5px;height:5px;border-radius:50%;background:#111"></div>
<div class="a" style="left:1315px;top:737px;width:5px;height:5px;border-radius:50%;background:#111"></div>
<div class="a" style="left:1315px;top:758px;width:5px;height:5px;border-radius:50%;background:#111"></div>
<div class="a" style="left:1315px;top:780px;width:5px;height:5px;border-radius:50%;background:#111"></div>
<span class="t vf" style="left:1331px;top:711px;font-size:12px;color:#111">Uni Micros hjemmesider</span>
<span class="t vf" style="left:1331px;top:732px;font-size:12px;color:#111">Skatteetaten</span>
<span class="t vf" style="left:1331px;top:753px;font-size:12px;color:#111">Altinn</span>
<span class="t vf" style="left:1331px;top:774px;font-size:12px;color:#111">Bedriftsinformasjon</span>

<!-- Dialog -->
<div class="a" style="left:70px;top:380px;width:1033px;height:543px;background:#f0f0f0;box-shadow:0 1px 4px rgba(0,0,0,.45);z-index:5">
<div class="a" style="left:0;top:0;width:1033px;height:52px;background:#fff"></div>
<div class="a" style="left:1px;top:8px;width:16px;height:15px;background:#1a8fcb;color:#fff;font-size:8px;font-weight:bold;line-height:15px;text-align:center">uni</div>
<div class="a" style="left:23px;top:8px;width:1px;height:15px;background:#888"></div>
<span class="t m" style="left:32px;top:8px">Rediger</span>
<span class="t m" style="left:84px;top:8px">Vis</span>
<span class="t m" style="left:111px;top:8px">Import/Export</span>
<span class="t m" style="left:193px;top:8px">Hjelp</span>
<svg class="i" style="left:73px;top:11px" width="170" height="9" fill="#555"><path d="M0 1h5L2.500 4zM27.500 1h5l-2.500 3zM109 1h5l-2.500 3zM148.500 1h5l-2.500 3zM160 3h5v.8h-5zM160 5h5l-2.500 3z"/></svg>
<span class="t c" style="left:502px;top:8px;letter-spacing:.1px">Rapportoversikt</span>
<div class="a" style="left:918px;top:14px;width:11px;height:1px;background:#777"></div>
<div class="a" style="left:962px;top:9px;width:9px;height:9px;border:1px solid #777"></div>
<svg class="i" style="left:1006px;top:8px" width="11" height="11"><path d="M.5.5l10 10M10.500.5l-10 10" stroke="#666"/></svg>
<div class="a" style="left:1px;top:28px;width:52px;height:23px;border-radius:4px 4px 0 0;background:linear-gradient(#3560bd,#1f4096 55%,#132f7f)"></div>
<span class="t c" style="left:27px;top:33px;color:#fff;text-decoration:underline">Fil</span>
<div class="a" style="left:0;top:51px;width:1033px;height:1px;background:#8f8f8f"></div>
<div class="a" style="left:58px;top:29px;width:48px;height:23px;background:#fff;border:1px solid #b9b9b9;border-bottom:0;border-radius:3px 3px 0 0"></div>
<span class="t tb" style="left:70px;top:35px">Hjem</span>
<span class="t tb" style="left:123px;top:35px">Rediger</span>
<span class="t tb" style="left:190px;top:35px">Vis</span>
<span class="t tb" style="left:232px;top:35px">Import/Export</span>
<span class="t tb" style="left:327px;top:35px">Hjelp</span>
<div class="a" style="left:0;top:52px;width:1033px;height:84px;background:linear-gradient(#fff,#fcfcfc 40%,#eeeff1);border-bottom:1px solid #7f7f7f"></div>
<div class="a" style="left:0;top:137px;width:1033px;height:3px;background:#d6d6d6"></div>
<div class="sep" style="left:117px;top:54px;height:80px"></div>
<div class="sep" style="left:268px;top:54px;height:80px"></div>
<div class="sep" style="left:358px;top:54px;height:80px"></div>
<div class="sep" style="left:448px;top:54px;height:80px"></div>
<span class="t c g" style="left:61px;top:120px">Utskrift</span>
<span class="t c g" style="left:192px;top:120px">Rediger</span>
<span class="t c g" style="left:313px;top:120px">Rapport</span>
<span class="t c g" style="left:404px;top:120px">Avslutt</span>
<svg class="i" style="left:25px;top:58px" width="30" height="32"><use href="#prt"/></svg>
<svg class="i" style="left:36px;top:73px" width="20" height="20" viewBox="0 0 20 20"><circle cx="8" cy="8" r="6" fill="#d8e4ee" stroke="#556" stroke-width="1.400"/><path d="M12 12l7 7" stroke="#a97a3f" stroke-width="2.500"/></svg>
<span class="t c" style="left:39px;top:91px">Forhåndsvis</span>
<svg class="i" style="left:77px;top:58px" width="30" height="32"><use href="#prt"/></svg>
<span class="t c" style="left:92px;top:91px">Skriv</span><span class="t c" style="left:92px;top:104px">ut</span>
<svg class="i" style="left:125px;top:57px" width="32" height="36" viewBox="0 0 32 36"><path d="M4 3h24v29H4z" fill="#f6f6f4" stroke="#888"/><path d="M7 9h18M7 13h18M7 17h18M7 21h18M7 25h18" stroke="#bcc7d4"/><path d="M4 3l3 0 15 25-4 3-15-27z" fill="#f0c53a" stroke="#8a6d1c"/><circle cx="5" cy="4" r="3" fill="#d04040"/></svg>
<span class="t c" style="left:142px;top:91px;letter-spacing:.2px">Rediger</span>
<svg class="i" style="left:169px;top:58px" width="14" height="17" viewBox="0 0 14 17"><path d="M.5.5h9l4 4v12H.5z" fill="#f4f5f6" stroke="#8b949c"/><circle cx="6" cy="9" r="3.500" fill="none" stroke="#334"/><path d="M8.500 11.500l4 4" stroke="#a97a3f" stroke-width="1.800"/></svg>
<span class="t" style="left:185px;top:59px;letter-spacing:.3px">Logo</span>
<svg class="i" style="left:168px;top:79px" width="14" height="15" viewBox="0 0 14 15"><path d="M.5.500h13v14H.5z" fill="#f0f4f7" stroke="#607080"/><path d="M2 3h6M4 6h8M2 9h6M4 12h6" stroke="#1f6fc0" stroke-width="1.200"/></svg>
<span class="t" style="left:185px;top:80px;letter-spacing:.25px">Vis gruppering</span>
<svg class="i" style="left:275px;top:58px" width="15" height="17" viewBox="0 0 15 17"><path d="M4 .5h7l3.500 3.500v9H4z" fill="#f5f6f7" stroke="#8a929a"/><path d="M.5 4h8l3 3v9.500H.5z" fill="#f8f8f8" stroke="#8a929a"/><path d="M2.500 9h7M2.500 12h7" stroke="#bbb"/></svg>
<span class="t" style="left:293px;top:59px;letter-spacing:.1px">Kopier</span>
<svg class="i" style="left:275px;top:79px" width="14" height="17" viewBox="0 0 14 17"><path d="M.5 2.500h13v14H.5z" fill="#d9c28a" stroke="#776b3f"/><path d="M3.500 5h7.500v10H3.500z" fill="#f8f8f8" stroke="#888"/><path d="M4 .5h6v3.500H4z" fill="#cfd2d4" stroke="#666"/></svg>
<span class="t" style="left:293px;top:80px">Lim inn</span>
<svg class="i" style="left:276px;top:100px" width="15" height="17" viewBox="0 0 15 17"><path d="M.5.500h8l3.500 3.500v12.500H.5z" fill="#f4f5f6" stroke="#8a929a"/><path d="M2.500 7h7M2.500 10h4" stroke="#bbb"/><path d="M5 11l3 3 6-7" stroke="#2d6fc0" stroke-width="2" fill="none"/></svg>
<span class="t" style="left:293px;top:101px">Egenskaper</span>
<svg class="i" style="left:369px;top:59px" width="29" height="29" viewBox="0 0 29 29"><circle cx="14.500" cy="14.500" r="13.500" fill="#3f84d2" stroke="#2c5f9c"/><circle cx="14.500" cy="14.500" r="11" fill="none" stroke="#cfe1f2"/><text x="14.500" y="21" text-anchor="middle" fill="#fff" font-size="19" font-weight="bold" font-family="Liberation Sans">?</text></svg>
<span class="t c" style="left:383px;top:91px">Hjelp</span>
<svg class="i" style="left:412px;top:57px" width="24" height="33"><use href="#door"/></svg>
<span class="t c" style="left:423px;top:91px">Lukk</span>

<!-- tree -->
<div class="a" style="left:0;top:142px;width:225px;height:378px;background:#fff"></div>
<div class="d" style="left:16px;top:150px;height:291px;border-left-color:#aaa"></div>
<div class="h" style="left:16px;top:149px;width:10px"></div><div class="h" style="left:16px;top:164px;width:10px"></div><div class="h" style="left:16px;top:180px;width:10px"></div><div class="h" style="left:16px;top:195px;width:10px"></div><div class="h" style="left:16px;top:210px;width:10px"></div><div class="h" style="left:16px;top:226px;width:10px"></div><div class="h" style="left:16px;top:241px;width:10px"></div><div class="h" style="left:16px;top:257px;width:10px"></div><div class="h" style="left:16px;top:272px;width:10px"></div><div class="h" style="left:16px;top:287px;width:10px"></div><div class="h" style="left:16px;top:303px;width:10px"></div><div class="h" style="left:16px;top:318px;width:10px"></div><div class="h" style="left:16px;top:334px;width:10px"></div><div class="h" style="left:16px;top:349px;width:10px"></div><div class="h" style="left:16px;top:364px;width:10px"></div><div class="h" style="left:16px;top:380px;width:10px"></div><div class="h" style="left:16px;top:395px;width:10px"></div><div class="h" style="left:16px;top:410px;width:10px"></div><div class="h" style="left:16px;top:426px;width:10px"></div><div class="h" style="left:16px;top:441px;width:10px"></div>
<svg class="i" style="left:10px;top:314px" width="9" height="9"><path d="M.5.5h8v8h-8z" fill="#fff" stroke="#8b97a5"/><path d="M2 4.500h5M4.500 2v5" stroke="#335"/></svg>
<svg class="i" style="left:10px;top:422px" width="9" height="9"><path d="M.5.5h8v8h-8z" fill="#fff" stroke="#8b97a5"/><path d="M2 4.500h5M4.500 2v5" stroke="#335"/></svg>
<svg class="i" style="left:24px;top:141px" width="16" height="16"><use href="#star"/></svg>
<svg class="i" style="left:24px;top:157px" width="15" height="15"><use href="#fold"/></svg><svg class="i" style="left:24px;top:172px" width="15" height="15"><use href="#fold"/></svg><svg class="i" style="left:24px;top:188px" width="15" height="15"><use href="#fold"/></svg><svg class="i" style="left:24px;top:203px" width="15" height="15"><use href="#fold"/></svg><svg class="i" style="left:24px;top:218px" width="15" height="15"><use href="#fold"/></svg><svg class="i" style="left:24px;top:234px" width="15" height="15"><use href="#fold"/></svg><svg class="i" style="left:24px;top:249px" width="15" height="15"><use href="#fold"/></svg><svg class="i" style="left:24px;top:265px" width="15" height="15"><use href="#fold"/></svg><svg class="i" style="left:24px;top:280px" width="15" height="15"><use href="#fold"/></svg><svg class="i" style="left:24px;top:295px" width="15" height="15"><use href="#fold"/></svg><svg class="i" style="left:24px;top:311px" width="15" height="15"><use href="#fold"/></svg><svg class="i" style="left:24px;top:326px" width="15" height="15"><use href="#foldb"/></svg><svg class="i" style="left:24px;top:342px" width="15" height="15"><use href="#fold"/></svg><svg class="i" style="left:24px;top:357px" width="15" height="15"><use href="#fold"/></svg><svg class="i" style="left:24px;top:372px" width="15" height="15"><use href="#fold"/></svg><svg class="i" style="left:24px;top:388px" width="15" height="15"><use href="#fold"/></svg><svg class="i" style="left:24px;top:403px" width="15" height="15"><use href="#fold"/></svg><svg class="i" style="left:24px;top:418px" width="15" height="15"><use href="#fold"/></svg><svg class="i" style="left:24px;top:434px" width="15" height="15"><use href="#fold"/></svg>
<span class="t tr" style="left:43px;top:142px">Favoritter</span>
<span class="t tr" style="left:43px;top:157px">Alle rapporter</span>
<span class="t tr" style="left:43px;top:173px">Aksjeselskap</span>
<span class="t tr" style="left:43px;top:188px">Anleggsregister</span>
<span class="t tr" style="left:43px;top:204px">Avstemming</span>
<span class="t tr" style="left:43px;top:219px">Batchrapporter</span>
<span class="t tr" style="left:43px;top:234px">Budsjett</span>
<span class="t tr" style="left:43px;top:250px">Fakturamottak</span>
<span class="t tr" style="left:43px;top:265px">Faste register</span>
<span class="t tr" style="left:43px;top:280px">Journal/kontoutskrifter</span>
<span class="t tr" style="left:43px;top:296px">Klassiske rapporter</span>
<span class="t tr" style="left:43px;top:311px">Merverdiavgift</span>
<span class="t tr" style="left:43px;top:327px">Min egne rapporter</span>
<span class="t tr" style="left:43px;top:342px">Prosjekt</span>
<span class="t tr" style="left:43px;top:357px">Remittering</span>
<span class="t tr" style="left:43px;top:373px">Resultat og Balanse</span>
<span class="t tr" style="left:43px;top:388px">Saldolister</span>
<span class="t tr" style="left:43px;top:403px">Testrapporter</span>
<span class="t tr" style="left:43px;top:419px">Blanketter</span>
<span class="t tr" style="left:43px;top:434px">Valuta</span>

<!-- search & list -->
<div class="a" style="left:232px;top:145px;width:794px;height:17px;background:#fff;border:1px solid #a9bcd8"></div>
<span class="t lg" style="left:234px;top:147px;color:#888">Søk...</span>
<div class="a" style="left:232px;top:167px;width:796px;height:273px;background:#fff"></div>
<div class="a" style="left:571px;top:167px;width:1px;height:22px;background:#e2e2e2"></div>
<span class="t lg" style="left:235px;top:172px">Navn</span>
<span class="t lg" style="left:575px;top:172px">Beskrivelse</span>
<div class="a" style="left:232px;top:189px;width:796px;height:18px;background:#f0f0f0"></div>
<div class="a" style="left:232px;top:207px;width:796px;height:18px;background:#e3e3e3"></div>
<div class="a" style="left:232px;top:243px;width:796px;height:18px;background:#e3e3e3"></div>
<div class="a" style="left:232px;top:280px;width:796px;height:18px;background:#e3e3e3"></div>
<div class="a" style="left:232px;top:316px;width:796px;height:18px;background:#e3e3e3"></div>
<div class="a" style="left:232px;top:353px;width:796px;height:18px;background:#e3e3e3"></div>
<svg class="i" style="left:236px;top:190px" width="11" height="16"><use href="#fy"/></svg><svg class="i" style="left:236px;top:208px" width="11" height="16"><use href="#fy"/></svg><svg class="i" style="left:236px;top:226px" width="11" height="16"><use href="#fy"/></svg><svg class="i" style="left:236px;top:245px" width="11" height="16"><use href="#fy"/></svg><svg class="i" style="left:236px;top:263px" width="11" height="16"><use href="#fy"/></svg><svg class="i" style="left:236px;top:281px" width="11" height="16"><use href="#fy"/></svg><svg class="i" style="left:236px;top:299px" width="11" height="16"><use href="#fy"/></svg><svg class="i" style="left:236px;top:318px" width="11" height="16"><use href="#fy"/></svg><svg class="i" style="left:236px;top:336px" width="11" height="16"><use href="#fy"/></svg><svg class="i" style="left:236px;top:354px" width="11" height="16"><use href="#fy"/></svg>
<span class="t l" style="left:251px;top:190px">Bilagsdifferanser</span><span class="t l" style="left:575px;top:190px">Viser bilag som inneholder differanser</span>
<span class="t l" style="left:251px;top:209px">Differanse faktura/regnskap</span><svg class="i" style="left:574px;top:209px" width="16" height="16"><use href="#star"/></svg><span class="t l" style="left:592px;top:209px">Differanse mellom ubetalte faktura og reskontro-saldo</span>
<span class="t l" style="left:251px;top:227px">Differanse i saldo</span><span class="t l" style="left:575px;top:227px">Differanse i saldo (akkumulert/transaksjoner)</span>
<span class="t l" style="left:251px;top:245px">Differanse mellom saldo og åpne poster</span><span class="t l" style="left:575px;top:245px">Liste over konti med differanse mellom saldo og åpne poster.</span>
<span class="t l" style="left:251px;top:263.500px">Differanse på periode</span><span class="t l" style="left:575px;top:263.500px">Rapporten viser bilag som er ført på flere perioder i hovedbok.</span>
<span class="t l" style="left:251px;top:282px">Hopp i bilagsserie</span><span class="t l" style="left:575px;top:282px">Viser hopp i bilagsserie</span>
<span class="t l" style="left:251px;top:300px">Kontoutskrift åpne poster kunder</span><span class="t l" style="left:575px;top:300px">Kontoutskrift åpne poster for kunder.</span>
<span class="t l" style="left:251px;top:318px">Kontoutskrift åpne poster kunder med valuta</span><span class="t l" style="left:575px;top:318px">Kontoutskrift åpne poster for kunder m/valuta</span>
<span class="t l" style="left:251px;top:336px">Kundereskontroposter utenfor regnskapsperioden</span><span class="t l" style="left:575px;top:336px">Kundereskontroposter som faller utenfor regnskapsperioden. Kan sorteres</span>
<span class="t l" style="left:251px;top:355px">Leverandørreskontroposter utenfor regnskapsperiode</span><span class="t l" style="left:575px;top:355px">Leverandørreskontroposter som faller utenfor regnskapsperioden. Kan sorteres.</span>

<svg class="i" style="left:238px;top:451px" width="11" height="15"><use href="#fy"/></svg>
<svg class="i" style="left:238px;top:474px" width="11" height="15"><use href="#fg"/></svg>
<svg class="i" style="left:238px;top:497px" width="11" height="15"><use href="#fbl"/></svg>
<span class="t lg" style="left:259px;top:451px">Systemdefinert rapport</span>
<span class="t lg" style="left:259px;top:474px">Privat rapport (kun tilgjengelig for denne brukeren)</span>
<span class="t lg" style="left:259px;top:497px">Egendefinert rapport</span>

<div class="a" style="left:0;top:522px;width:1033px;height:1px;background:#a5a5a5"></div>
<div class="a" style="left:0;top:523px;width:1033px;height:20px;background:#ededed"></div>
<div class="a" style="left:287px;top:523px;width:1px;height:20px;background:#a5a5a5"></div>
<svg class="i" style="left:1021px;top:530px" width="11" height="11" fill="#bbb"><path d="M8 0h2v2H8zM4 4h2v2H4zM8 4h2v2H8zM0 8h2v2H0zM4 8h2v2H4zM8 8h2v2H8z"/></svg>
</div>

<!-- Arrows -->
<svg class="i" style="left:0;top:0;z-index:8" width="1568" height="949" viewBox="0 0 1568 949">
<defs><filter id="sh" x="-30%" y="-30%" width="160%" height="160%"><feDropShadow dx="1" dy="1.500" stdDeviation="1.500" flood-color="#000" flood-opacity=".35"/></filter></defs>
<g fill="#e0453e" filter="url(#sh)">
<path d="M59 657L80 622 71 617 97 590 95 627 87 624 65 661z"/>
<path d="M264 604L283 589 277 582 307 578 293 605 288 597 269 610z"/>
<path d="M1150 598L1170 572 1162 566 1198 551 1190 587 1182 579 1156 604z"/>
</g></svg>
</div></body></html>
